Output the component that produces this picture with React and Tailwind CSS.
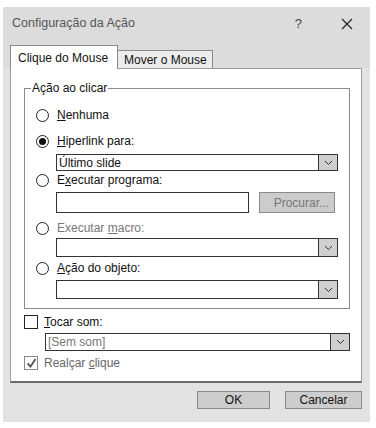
import React from 'react';

const font = { fontFamily: "'Liberation Sans', Arial, sans-serif" };

const Radio = ({ checked }) => (
  <span className="w-[13px] h-[13px] rounded-full border-[1.5px] border-[#222] bg-white flex items-center justify-center shrink-0">
    {checked && <span className="w-[7px] h-[7px] rounded-full bg-[#111]" />}
  </span>
);

const Chevron = () => (
  <svg width="9" height="6" viewBox="0 0 9 6" fill="none">
    <path d="M1 1l3.5 3.5L8 1" stroke="#333" strokeWidth="1" />
  </svg>
);

const Dropdown = ({ value, h = 'h-[19px]', extra = '', muted }) => (
  <div className={`flex ${h} border border-[#333] bg-white ${extra}`}>
    <div className={`flex-1 flex items-center pl-[2px] leading-none ${muted ? 'text-[#777]' : 'text-[#111]'}`}>{value}</div>
    <div className="w-[19px] border-l border-[#333] bg-[#cfcfcf] flex items-center justify-center">
      <Chevron />
    </div>
  </div>
);

const Row = ({ children, className = '' }) => (
  <div className={`flex items-center ${className}`}>{children}</div>
);

export default function App() {
  return (
    <div className="w-[376px] h-[428px] bg-white pt-[7px] pl-[3px] text-[12px] text-[#111] whitespace-nowrap" style={font}>
      <div className="w-[367px] h-[415px] bg-[#e3e3e3] flex flex-col">
        <div className="h-[31px] flex items-center bg-[#dcdcdc] pl-[9px] pt-[2px]">
          <span className="text-[#555] text-[12.5px]">Configuração da Ação</span>
          <span className="ml-auto mr-[39px] text-[#444] text-[13px]">?</span>
          <svg className="mr-[17px]" width="12" height="12" viewBox="0 0 12 12">
            <path d="M1 1l10 10M11 1L1 11" stroke="#222" strokeWidth="1.2" />
          </svg>
        </div>
        <div className="bg-[#dcdcdc] pt-[7px] pl-[7px] flex items-end">
          <div className="w-[108px] h-[24px] bg-white border border-b-0 border-[#8a8a8a] flex items-center pl-[7px] -mb-px relative">
            Clique do Mouse
          </div>
          <div className="w-[95px] h-[18px] bg-[#ececec] border border-l-0 border-b-0 border-[#8a8a8a] flex items-center pl-[6px]">
            Mover o Mouse
          </div>
        </div>
        <div className="ml-[7px] w-[352px] h-[315px] bg-white border border-[#a0a0a0] border-b-2 border-b-[#6a6a6a] flex flex-col">
          <fieldset className="ml-[13px] mr-[11px] mt-[12px] border border-[#8a8a8a] p-0">
            <legend className="ml-[6px] px-[1px] leading-[14px]">Ação ao clicar</legend>
            <div className="px-[11px] pb-[9px] flex flex-col">
              <Row className="h-[20px] mt-[10px]">
                <Radio />
                <span className="ml-[8px]"><u>N</u>enhuma</span>
              </Row>
              <Row className="h-[20px] mt-[6px]">
                <Radio checked />
                <span className="ml-[8px]"><u>H</u>iperlink para:</span>
              </Row>
              <Dropdown value="Último slide" h="h-[17px]" extra="ml-[20px] mt-[3px]" />
              <Row className="h-[18px]">
                <Radio />
                <span className="ml-[8px]">E<u>x</u>ecutar programa:</span>
              </Row>
              <div className="flex mt-[3px] ml-[20px] h-[21px]">
                <div className="w-[193px] border border-[#333] bg-white" />
                <div className="ml-[10px] w-[76px] border border-[#8a8a8a] bg-[#cccccc] text-[#777] flex items-center justify-end pr-[5px]">
                  Procurar...
                </div>
              </div>
              <Row className="h-[18px] mt-[6px]">
                <Radio />
                <span className="ml-[8px] text-[#777]">Executar <u>m</u>acro:</span>
              </Row>
              <Dropdown value="" extra="ml-[20px] mt-[1px]" />
              <Row className="h-[18px] mt-[2px]">
                <Radio />
                <span className="ml-[8px]"><u>A</u>ção do objeto:</span>
              </Row>
              <Dropdown value="" extra="ml-[20px] mt-[3px]" />
            </div>
          </fieldset>
          <Row className="h-[18px] mt-[4px] ml-[13px]">
            <span className="w-[14px] h-[14px] border border-[#222] bg-white" />
            <span className="ml-[6px]"><u>T</u>ocar som:</span>
          </Row>
          <Dropdown value="[Sem som]" h="h-[18px]" muted extra="ml-[34px] mr-[11px] mt-[2px]" />
          <Row className="h-[18px] mt-[3px] ml-[13px]">
            <span className="w-[14px] h-[14px] border border-[#888] bg-white flex items-center justify-center">
              <svg width="11" height="10" viewBox="0 0 11 10">
                <path d="M1.5 5.5l3 3L9.5 1" stroke="#555" strokeWidth="1.8" fill="none" />
              </svg>
            </span>
            <span className="ml-[6px] text-[#666]">Realçar <u>c</u>lique</span>
          </Row>
        </div>
        <div className="flex justify-end mt-[8px] mr-[8px] gap-[15px]">
          <button className="w-[73px] h-[18px] bg-[#cdcdcd] border border-[#8a8a8a] flex items-center justify-center leading-none">OK</button>
          <button className="w-[77px] h-[18px] bg-[#cdcdcd] border border-[#8a8a8a] flex items-center justify-center leading-none">Cancelar</button>
        </div>
      </div>
    </div>
  );
}
